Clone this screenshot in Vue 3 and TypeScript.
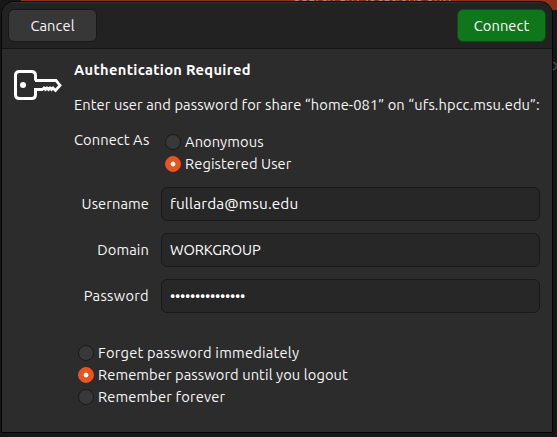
<script setup lang="ts">
import { ref } from 'vue'

interface Field {
  id: string
  label: string
  value: string
}

const fields: Field[] = [
  { id: 'username', label: 'Username', value: 'fullarda@msu.edu' },
  { id: 'domain', label: 'Domain', value: 'WORKGROUP' },
  { id: 'password', label: 'Password', value: '•••••••••••••••' },
]
const identities = [
  { id: 'anonymous', label: 'Anonymous' },
  { id: 'registered', label: 'Registered User' },
]
const retention = [
  { id: 'forget', label: 'Forget password immediately' },
  { id: 'session', label: 'Remember password until you logout' },
  { id: 'forever', label: 'Remember forever' },
]
const identity = ref('registered')
const keep = ref('session')
</script>

<template>
  <div class="desktop">
    <div class="banner"></div>
    <span class="banner-text">search any locations only</span>
    <span class="side-text">o</span>
    <main class="dialog">
      <header class="header">
        <button class="btn cancel">Cancel</button>
        <button class="btn connect">Connect</button>
      </header>
      <div class="body">
        <svg class="key" width="50" height="32" viewBox="0 0 50 32" fill="none" stroke="#fff" stroke-width="3">
          <path d="M22.5 11.5V6.5Q22.5 2.5 18.5 2.5H6.5Q2.5 2.5 2.5 6.5V25.5Q2.5 29.5 6.5 29.5H18.5Q22.5 29.5 22.5 25.5V20.5H30" />
          <path d="M22 11.5H43L47 16.5L42.5 21.5L40 19L38.5 20.5L37 19L35.5 20.5L34 19L32.5 20.5L31 19L29.5 20.5" stroke-width="2.8" />
          <circle cx="10" cy="16" r="3" fill="#fff" stroke="none" />
        </svg>
        <section class="content">
          <h1 class="title">Authentication Required</h1>
          <p class="message">Enter user and password for share “home-081” on “ufs.hpcc.msu.edu”:</p>
          <div class="identity">
            <span class="label">Connect As</span>
            <div class="options">
              <div v-for="o in identities" :key="o.id" class="option" @click="identity = o.id">
                <i class="radio" :class="{ on: identity === o.id }"></i>
                <span :class="'t-' + o.id">{{ o.label }}</span>
              </div>
            </div>
          </div>
          <div class="fields">
            <div v-for="f in fields" :key="f.id" class="field">
              <span class="label" :class="'l-' + f.id">{{ f.label }}</span>
              <div class="entry"><span :class="'v-' + f.id">{{ f.value }}</span></div>
            </div>
          </div>
          <div class="retention">
            <div v-for="o in retention" :key="o.id" class="option" @click="keep = o.id">
              <i class="radio" :class="{ on: keep === o.id }"></i>
              <span :class="'t-' + o.id">{{ o.label }}</span>
            </div>
          </div>
        </section>
      </div>
    </main>
  </div>
</template>

<style>
body { background: #171717; overflow: hidden; }
</style>

<style scoped>
* { box-sizing: border-box; }
.desktop {
  position: relative;
  width: 557px;
  height: 437px;
  padding: 1px 4px 4px 1px;
  overflow: hidden;
  background: #171717;
  color: #f7f7f7;
  font: 14.667px/22px Ubuntu, "Noto Sans", sans-serif;
  letter-spacing: 0.1px;
  white-space: nowrap;
}
.banner { position: absolute; left: 21px; top: 0; width: 536px; height: 10px; background: #8f3215; }
.banner-text { position: absolute; left: 294px; top: -13px; font-size: 14.3px; letter-spacing: 0; line-height: 18px; color: #a79187; }
.side-text { position: absolute; left: 549px; top: 54px; color: #55514e; }
.dialog {
  position: relative;
  width: 552px;
  height: 432px;
  border: 1px solid #050505;
  border-radius: 13px 13px 0 0;
  background: #2c2c2c;
  overflow: hidden;
}
.header {
  display: flex;
  justify-content: space-between;
  height: 47px;
  padding: 7px 6px 0 6px;
  background: #222;
  border-bottom: 1px solid #151515;
  box-shadow: inset 0 1px #303030;
}
.btn {
  width: 89px;
  height: 33px;
  padding: 0;
  border: 1px solid #191919;
  border-radius: 6px;
  color: #f7f7f7;
  font: inherit;
  letter-spacing: inherit;
}
.cancel { background: #373737; }
.connect { background: #0f761b; border-color: #0b4c12; color: #fff; }
.body { display: flex; padding: 20px 12px 0 11px; }
.key { flex: none; }
.content { flex: 1; min-width: 0; margin: -10px 0 0 11px; }
.title { margin: 0; font: inherit; font-weight: 700; letter-spacing: 0.31px; color: #fff; }
.message { margin: 13px 0 0; }
.identity { display: flex; gap: 16px; margin-top: 13px; }
.label { flex: none; width: 75px; text-align: right; }
.options { margin-top: 2px; }
.option { display: flex; align-items: center; gap: 4px; height: 22px; }
.radio { flex: none; width: 16px; height: 16px; border: 1px solid #1b1b1b; border-radius: 50%; background: #383838; }
.radio.on { border-color: #e95420; background: radial-gradient(circle, #fff 0 2px, #e95420 2.8px); }
.fields { display: grid; gap: 12px; margin-top: 12px; }
.field { display: flex; align-items: center; gap: 12px; height: 34px; }
.entry { flex: 1; height: 34px; padding: 5px 8px; border: 1px solid #191919; border-radius: 6px; background: #272727; color: #fff; }
.l-password { letter-spacing: 0.3px; }
.v-username { font-size: 15.3px; letter-spacing: 0.15px; }
.v-domain { letter-spacing: -0.1px; }
.v-password { letter-spacing: -0.27px; }
.t-forget { letter-spacing: 0.23px; }
.t-forever { letter-spacing: 0.15px; }
.retention { margin: 29px 0 0 4px; }
</style>
